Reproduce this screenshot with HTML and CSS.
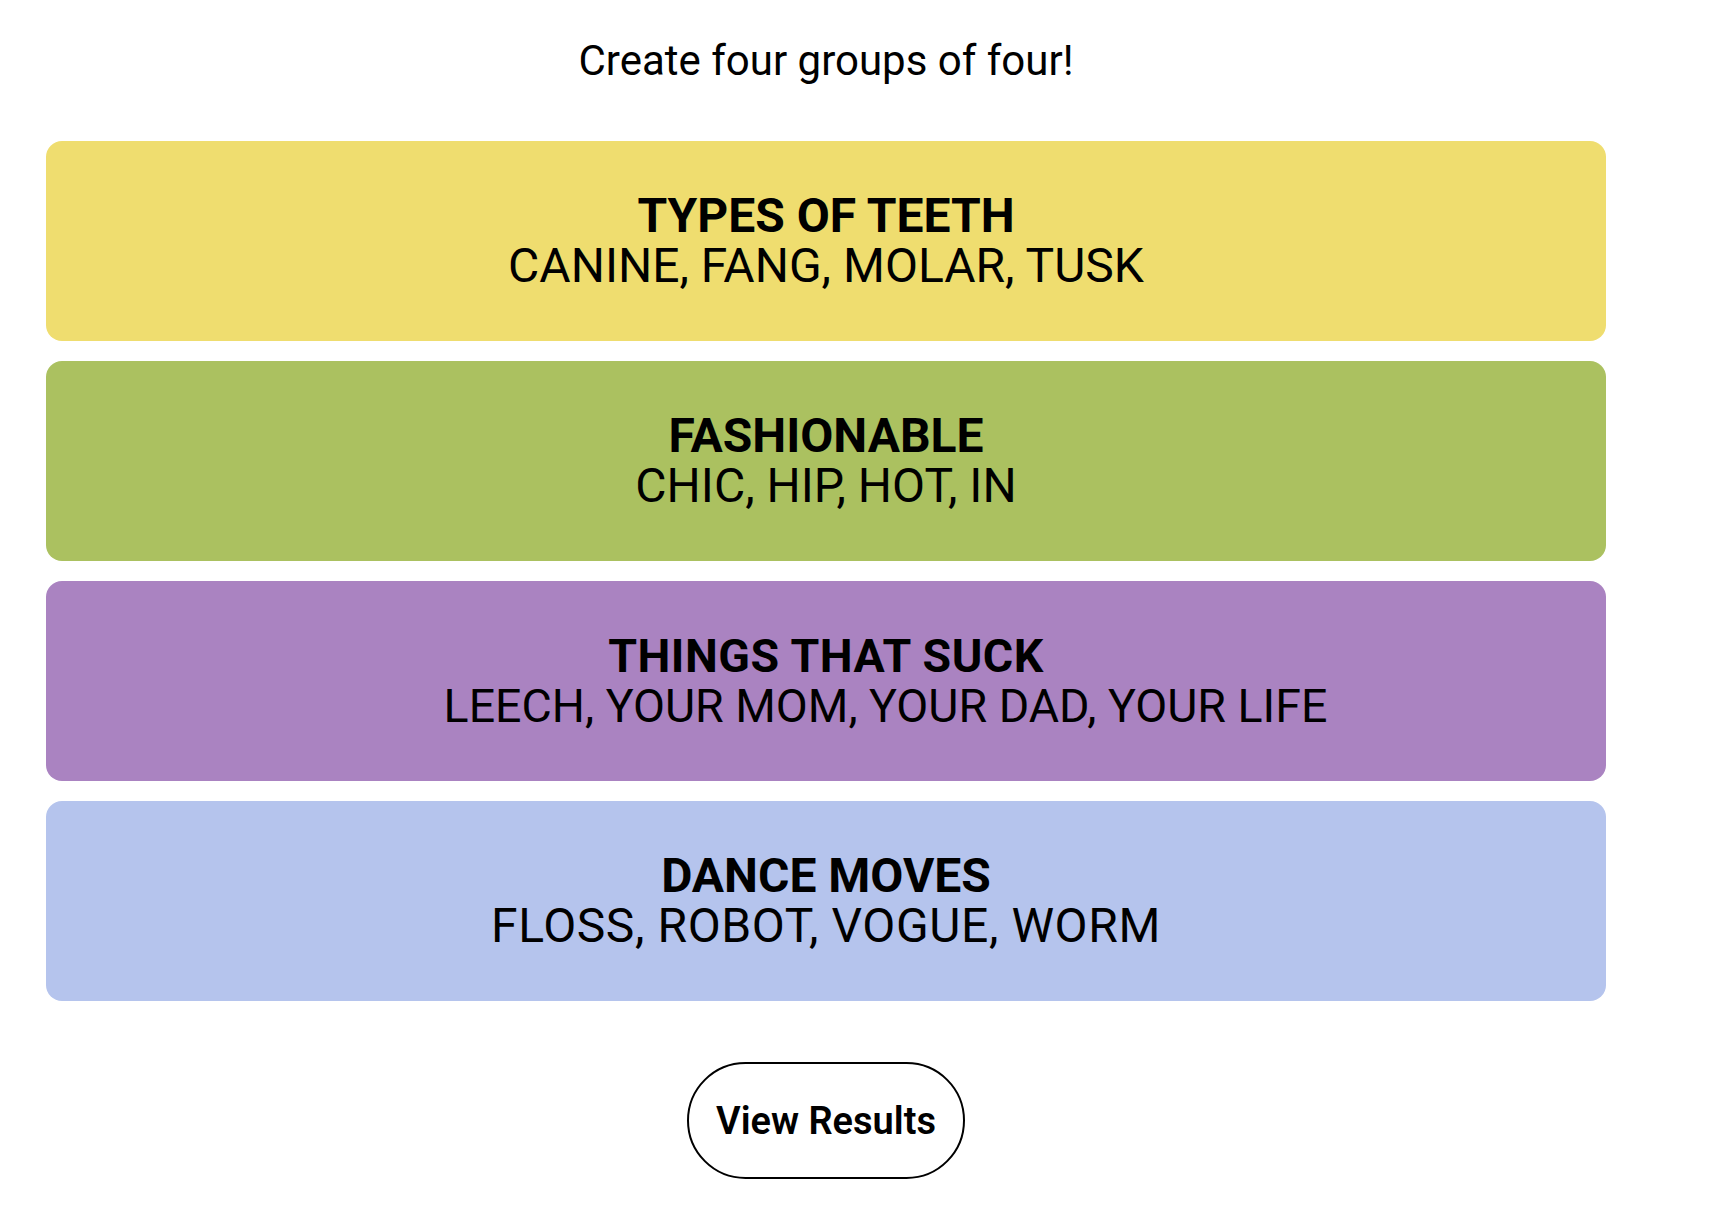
FILE: index.html
```html
<!DOCTYPE html>
<html lang="en">
<head>
<meta charset="utf-8">
<title>Connections</title>
<link rel="stylesheet" href="styles.css">
</head>
<body>
<main class="board">
  <h1 class="prompt">Create four groups of four!</h1>
  <section class="groups">
    <div class="group group-yellow">
      <div class="group-title">TYPES OF TEETH</div>
      <div class="group-members">CANINE, FANG, MOLAR, TUSK</div>
    </div>
    <div class="group group-green">
      <div class="group-title">FASHIONABLE</div>
      <div class="group-members">CHIC, HIP, HOT, IN</div>
    </div>
    <div class="group group-purple">
      <div class="group-title">THINGS THAT SUCK</div>
      <div class="group-members">LEECH, YOUR MOM, YOUR DAD, YOUR LIFE</div>
    </div>
    <div class="group group-blue">
      <div class="group-title">DANCE MOVES</div>
      <div class="group-members">FLOSS, ROBOT, VOGUE, WORM</div>
    </div>
  </section>
  <div class="actions">
    <button class="results-btn" type="button">View Results</button>
  </div>
</main>
</body>
</html>
```
FILE: styles.css
```css
html, body {
  margin: 0;
  padding: 0;
  background: #ffffff;
}

body {
  font-family: Roboto, "Noto Sans", "Liberation Sans", sans-serif;
  color: #000000;
}

.board {
  width: 1560px;
  margin-left: 46px;
  padding-top: 37px;
  display: flex;
  flex-direction: column;
  align-items: stretch;
}

.prompt {
  margin: 0;
  font-size: 42px;
  font-weight: 400;
  line-height: 48px;
  text-align: center;
}

.groups {
  margin-top: 56px;
  display: flex;
  flex-direction: column;
  gap: 20px;
}

.group {
  height: 200px;
  border-radius: 16px;
  display: flex;
  flex-direction: column;
  justify-content: center;
  align-items: center;
  text-align: center;
  font-size: 48px;
  line-height: 50px;
}

.group-title {
  font-weight: 700;
}

.group-members {
  font-weight: 400;
}

.group-yellow { background: #efdd6f; }
.group-green { background: #abc160; }
.group-blue { background: #b5c4ed; }
.group-blue .group-members { letter-spacing: 0.6px; }

.group-purple {
  background: #aa83c1;
  font-size: 46.5px;
}
.group-purple .group-title { letter-spacing: 0.5px; }
.group-purple .group-members { padding-left: 119px; }

.actions {
  margin-top: 61px;
  display: flex;
  justify-content: center;
}

.results-btn {
  width: 278px;
  height: 117px;
  border: 2px solid #000000;
  border-radius: 60px;
  background: #ffffff;
  color: #000000;
  font-family: Roboto, "Noto Sans", "Liberation Sans", sans-serif;
  font-size: 38px;
  font-weight: 600;
  padding: 0;
}
```
